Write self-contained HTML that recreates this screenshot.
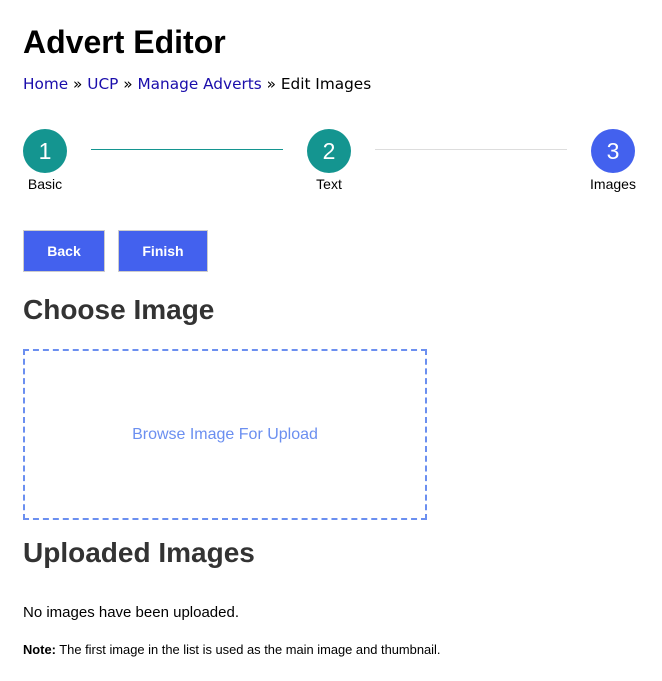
<!DOCTYPE html>
<html><head><style>
body{margin:0;background:#fff;font-family:"Liberation Sans",Arial,sans-serif;}
h1{position:absolute;left:23px;top:23px;margin:0;font-size:32px;font-weight:bold;color:#000;line-height:38px}
.bc{position:absolute;left:23px;top:75px;font-family:"DejaVu Sans",Verdana,sans-serif;font-size:15.3px;color:#000;white-space:nowrap}
.bc a{color:#1a0dab;text-decoration:none}
.c{position:absolute;top:129px;width:44px;height:44px;border-radius:50%;color:#fff;font-size:23px;text-align:center;line-height:44px}
.l{position:absolute;top:176px;font-size:14px;width:80px;text-align:center}
.ln{position:absolute;top:149px;height:1px;width:192px}
.btn{position:absolute;top:230px;height:40px;background:#4361ee;border:1px solid #ccc;color:#fff;font-weight:bold;font-size:14px;text-align:center;line-height:40px}
h2{position:absolute;left:23px;margin:0;font-size:28px;color:#333;font-weight:bold;line-height:34px}
.box{position:absolute;left:23px;top:349px;width:400px;height:167px;border:2px dashed #6b8ff0;color:#6b8ff0;font-size:16px;text-align:center;line-height:167px}
</style></head><body>
<h1>Advert Editor</h1>
<div class="bc"><a>Home</a> » <a>UCP</a> » <a>Manage Adverts</a> » Edit Images</div>
<div class="c" style="left:23px;background:#149590">1</div>
<div class="c" style="left:307px;background:#149590">2</div>
<div class="c" style="left:591px;background:#4361ee">3</div>
<div class="ln" style="left:91px;background:#149590"></div>
<div class="ln" style="left:375px;background:#ddd"></div>
<div class="l" style="left:5px">Basic</div>
<div class="l" style="left:289px">Text</div>
<div class="l" style="left:573px">Images</div>
<div class="btn" style="left:23px;width:80px">Back</div>
<div class="btn" style="left:118px;width:88px">Finish</div>
<h2 style="top:293px">Choose Image</h2>
<div class="box">Browse Image For Upload</div>
<h2 style="top:536px">Uploaded Images</h2>
<div style="position:absolute;left:23px;top:604px;font-size:15px">No images have been uploaded.</div>
<div style="position:absolute;left:23px;top:642px;font-size:12.9px;white-space:nowrap"><b>Note:</b> The first image in the list is used as the main image and thumbnail.</div>
</body></html>
